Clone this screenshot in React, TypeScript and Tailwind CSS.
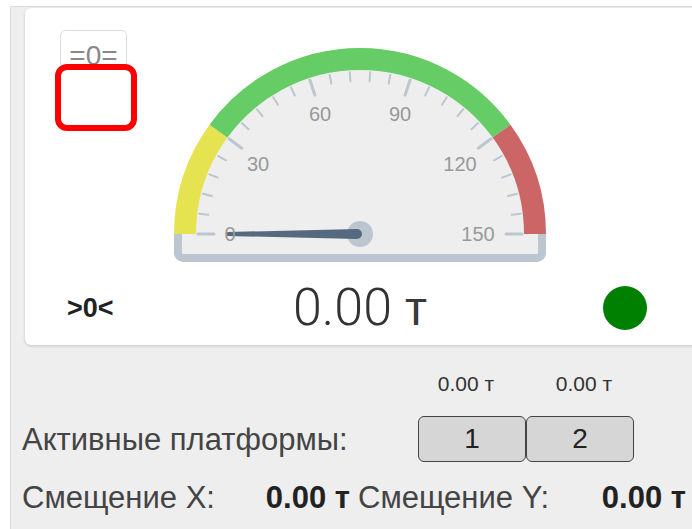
import React from 'react';

// gauge geometry (svg coordinates)
const CX = 190;
const CY = 194;
const MAX = 150;

const polar = (v: number, r: number): [number, number] => {
  const a = Math.PI * (1 - v / MAX);
  return [CX + r * Math.cos(a), CY - r * Math.sin(a)];
};

const arc = (from: number, to: number, r: number) => {
  const [x1, y1] = polar(from, r);
  const [x2, y2] = polar(to, r);
  return `M ${x1} ${y1} A ${r} ${r} 0 0 1 ${x2} ${y2}`;
};

const bands = [
  { from: 0, to: 30, color: '#e5e350' },
  { from: 30, to: 120, color: '#66cc66' },
  { from: 120, to: 150, color: '#cc6666' },
];

const labels = [
  { text: '0', x: 60, y: 194 },
  { text: '30', x: 88, y: 124 },
  { text: '60', x: 150, y: 74 },
  { text: '90', x: 230, y: 74 },
  { text: '120', x: 290, y: 124 },
  { text: '150', x: 308, y: 194 },
];

const ticks = Array.from({ length: MAX / 6 + 1 }, (_, i) => i * 6);

const Gauge: React.FC<{ value: number }> = ({ value }) => {
  const tip = polar(value, 132);
  const angle = (Math.atan2(tip[1] - CY, tip[0] - CX) * 180) / Math.PI;
  return (
    <svg width={380} height={226} viewBox="0 0 380 226" className="block">
      <path d={`M ${CX - 175} ${CY} A 175 175 0 0 1 ${CX + 175} ${CY} Z`} fill="#eeeeee" />
      <path
        d="M 8 194 V 213 a 5 5 0 0 0 5 5 H 367 a 5 5 0 0 0 5 -5 V 194"
        fill="#eeeeee"
        stroke="#bcc6d0"
        strokeWidth={8}
      />
      {bands.map((b) => (
        <path key={b.from} d={arc(b.from, b.to, 175)} fill="none" stroke={b.color} strokeWidth={22} />
      ))}
      {ticks.map((t) => {
        const major = t % 30 === 0;
        const [x1, y1] = polar(t, 162);
        const [x2, y2] = polar(t, major ? 146 : 153);
        return (
          <line
            key={t}
            x1={x1}
            y1={y1}
            x2={x2}
            y2={y2}
            stroke="#bcc6d0"
            strokeWidth={major ? 3 : 2}
            strokeLinecap="round"
          />
        );
      })}
      <circle cx={CX} cy={CY} r={13} fill="#bcc6d0" />
      <g transform={`rotate(${angle} ${CX} ${CY})`}>
        <path
          d={`M ${CX + 3} ${CY - 5} L ${CX + 132} ${CY - 2} A 2 2 0 0 1 ${CX + 132} ${CY + 2} L ${CX + 3} ${CY + 5} A 5 5 0 0 1 ${CX + 3} ${CY - 5} Z`}
          fill="#566a7f"
        />
      </g>
      {labels.map((l) => (
        <text
          key={l.text}
          x={l.x}
          y={l.y}
          textAnchor="middle"
          dominantBaseline="central"
          fontSize={20}
          fill="#999999"
          fontFamily="'Liberation Sans', Arial, sans-serif"
        >
          {l.text}
        </text>
      ))}
    </svg>
  );
};

export default function App() {
  const platforms = [
    { id: 1, load: '0.00 т' },
    { id: 2, load: '0.00 т' },
  ];

  return (
    <div className="h-[529px] w-[692px] overflow-hidden bg-white pt-[6px] pl-[10px] font-['Liberation_Sans',Arial,sans-serif] text-[#333]">
      <div className="flex h-[523px] w-[700px] flex-col border-t border-l border-[#dcdcdc] bg-[#eeeeee] pl-[11px]">
        {/* weighing card */}
        <div className="relative ml-[3px] mt-[1px] h-[337px] w-[700px] rounded-md bg-white shadow-[0_1px_3px_rgba(0,0,0,0.18)]">
          <div className="flex items-start pl-[35px] pt-[22px]">
            <button className="box-border h-[38px] w-[67px] rounded-[5px] border border-[#dddddd] bg-white pt-[12px] text-[28px] leading-[26px] text-[#888]">
              =0=
            </button>
            <div className="ml-[43px] mt-[10px]">
              <Gauge value={0} />
            </div>
          </div>
          <div className="mt-[20px] flex h-[44px] items-center">
            <span className="ml-[42px] w-[50px] text-[27px] font-bold leading-none text-[#222]">&gt;0&lt;</span>
            <div className="flex w-[486px] items-baseline justify-center text-[#333]">
              <span className="font-['Roboto',sans-serif] text-[52px] font-light leading-none">0.00</span>
              <span className="ml-[13px] text-[48px] leading-none text-[#3a3a3a]">т</span>
            </div>
            <span className="h-[44px] w-[44px] rounded-full bg-[#008000]" />
          </div>
          <div className="absolute left-[30px] top-[56px] h-[67px] w-[82px] rounded-[12px] border-[6px] border-[#ff0000]" />
        </div>

        {/* platform loads */}
        <div className="mt-[26px] flex h-[24px] items-center pl-[390px] text-[21px] leading-none">
          <span className="w-[108px] text-center">{platforms[0].load}</span>
          <span className="ml-[10px] w-[108px] text-center">{platforms[1].load}</span>
        </div>
        <div className="mt-[21px] flex h-[46px] items-center">
          <span className="w-[396px] text-[31px] leading-none text-[#444]">Активные платформы:</span>
          {platforms.map((p) => (
            <button
              key={p.id}
              className="h-[46px] w-[108px] rounded-[6px] border border-[#444] bg-[#d6d6d6] text-[28px] leading-none text-[#222]"
            >
              {p.id}
            </button>
          ))}
        </div>
        <div className="mt-[18px] flex h-[34px] items-center text-[31px] leading-none">
          <div className="flex w-[328px] justify-between">
            <span className="text-[#444]">Смещение X:</span>
            <span className="font-bold text-[#222]">0.00 т</span>
          </div>
          <div className="ml-[8px] flex w-[328px] justify-between">
            <span className="text-[#444]">Смещение Y:</span>
            <span className="font-bold text-[#222]">0.00 т</span>
          </div>
        </div>
      </div>
    </div>
  );
}
